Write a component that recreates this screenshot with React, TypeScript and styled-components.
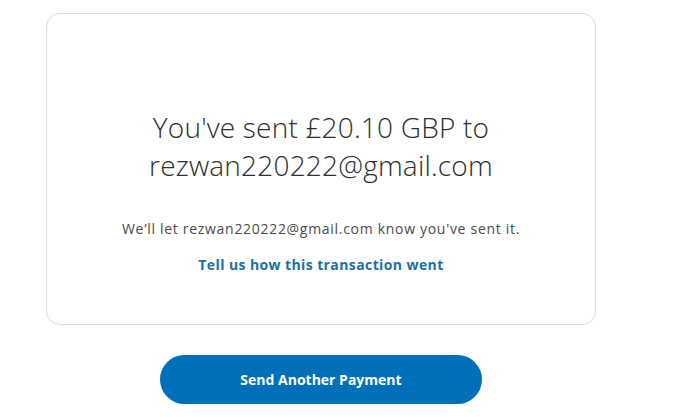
import React from 'react'
import { styled, createGlobalStyle } from 'styled-components';

const GlobalStyle = createGlobalStyle`
	body {
		margin: 0;
		background: #ffffff;
		font-family: "Open Sans", "Liberation Sans", sans-serif;
	}
`

const Page = styled.div`
	width: 550px;
	padding: 13px 0 0 46px;
	display: flex;
	flex-direction: column;
	align-items: center;
`

const Card = styled.div`
	box-sizing: border-box;
	width: 550px;
	height: 312px;
	border: 1px solid #dcdcdc;
	border-radius: 14px;
	padding-top: 94px;
	display: flex;
	flex-direction: column;
	align-items: center;
	text-align: center;
`

const Heading = styled.h1`
	margin: 0;
	font-size: 28px;
	font-weight: 300;
	line-height: 38px;
	letter-spacing: 0.2px;
	color: #2c2e2f;
`

const Note = styled.p`
	margin: 35px 0 0;
	font-size: 14px;
	line-height: 20px;
	letter-spacing: 0.7px;
	color: #4a4a4a;
`

const FeedbackLink = styled.a`
	margin-top: 16px;
	font-size: 14px;
	font-weight: 700;
	line-height: 20px;
	letter-spacing: 0.4px;
	color: #1a6fa8;
	text-decoration: none;
	cursor: pointer;
`

const PrimaryButton = styled.button`
	margin-top: 30px;
	width: 322px;
	height: 49px;
	border: none;
	border-radius: 25px;
	background-color: #0070ba;
	color: #ffffff;
	font-family: "Open Sans", "Liberation Sans", sans-serif;
	font-size: 14px;
	font-weight: 700;
	cursor: pointer;
`

const App = () => {
	return (
		<>
			<GlobalStyle />
			<Page>
				<Card>
					<Heading>
						You've sent £20.10 GBP to<br />rezwan220222@gmail.com
					</Heading>
					<Note>We’ll let rezwan220222@gmail.com know you've sent it.</Note>
					<FeedbackLink>Tell us how this transaction went</FeedbackLink>
				</Card>
				<PrimaryButton>Send Another Payment</PrimaryButton>
			</Page>
		</>
	);
};

export default App
